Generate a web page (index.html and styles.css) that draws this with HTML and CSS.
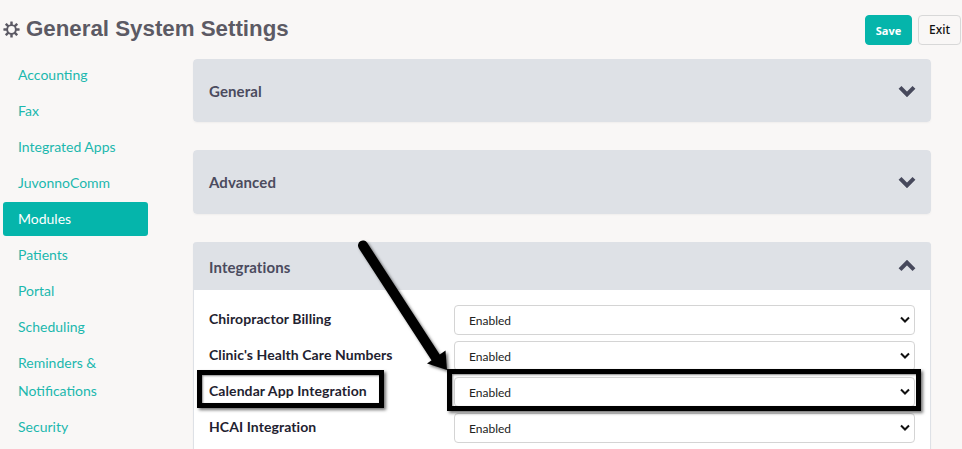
FILE: index.html
```html
<!DOCTYPE html>
<html lang="en">
<head>
<meta charset="utf-8">
<title>General System Settings</title>
<link rel="stylesheet" href="styles.css">
</head>
<body>
<div class="page">
  <header class="topbar">
    <h1 class="title">
      <svg class="gear" viewBox="0 0 18 18" aria-hidden="true">
        <g fill="#5c5a64">
          <rect x="7.7" y="0.4" width="2.6" height="17.2" rx="0.5"/>
          <rect x="7.7" y="0.4" width="2.6" height="17.2" rx="0.5" transform="rotate(45 9 9)"/>
          <rect x="7.7" y="0.4" width="2.6" height="17.2" rx="0.5" transform="rotate(90 9 9)"/>
          <rect x="7.7" y="0.4" width="2.6" height="17.2" rx="0.5" transform="rotate(135 9 9)"/>
        </g>
        <circle cx="9" cy="9" r="5.6" fill="#5c5a64"/>
        <circle cx="9" cy="9" r="3.6" fill="#f9f7f6"/>
      </svg>
      <span>General System Settings</span>
    </h1>
    <div class="actions">
      <button class="btn btn-save" type="button">Save</button>
      <button class="btn btn-exit" type="button">Exit</button>
    </div>
  </header>
  <div class="content">
    <nav class="sidenav">
      <a class="navitem" href="#">Accounting</a>
      <a class="navitem" href="#">Fax</a>
      <a class="navitem" href="#">Integrated Apps</a>
      <a class="navitem" href="#">JuvonnoComm</a>
      <a class="navitem active" href="#">Modules</a>
      <a class="navitem" href="#">Patients</a>
      <a class="navitem" href="#">Portal</a>
      <a class="navitem" href="#">Scheduling</a>
      <a class="navitem" href="#">Reminders &amp; Notifications</a>
      <a class="navitem" href="#">Security</a>
    </nav>
    <main class="panels">
      <section class="panel">
        <div class="panel-head tall"><h2>General</h2>
          <svg class="chev" viewBox="0 0 16 10" aria-hidden="true"><path d="M1.8 1.8L8 8l6.200-6.200" /></svg>
        </div>
      </section>
      <section class="panel">
        <div class="panel-head tall"><h2>Advanced</h2>
          <svg class="chev" viewBox="0 0 16 10" aria-hidden="true"><path d="M1.8 1.8L8 8l6.200-6.200" /></svg>
        </div>
      </section>
      <section class="panel open">
        <div class="panel-head"><h2>Integrations</h2>
          <svg class="chev" viewBox="0 0 16 10" aria-hidden="true"><path d="M1.8 8.200L8 2l6.200 6.200" /></svg>
        </div>
        <div class="panel-body">
          <div class="row"><label class="row-label">Chiropractor Billing</label>
            <div class="field"><select class="select"><option>Enabled</option><option>Disabled</option></select>
            <svg class="sel-arrow" viewBox="0 0 10 7" aria-hidden="true"><path d="M1 1.5l4 4 4-4"/></svg></div></div>
          <div class="row"><label class="row-label">Clinic's Health Care Numbers</label>
            <div class="field"><select class="select"><option>Enabled</option><option>Disabled</option></select>
            <svg class="sel-arrow" viewBox="0 0 10 7" aria-hidden="true"><path d="M1 1.5l4 4 4-4"/></svg></div></div>
          <div class="row"><label class="row-label">Calendar App Integration</label>
            <div class="field"><select class="select"><option>Enabled</option><option>Disabled</option></select>
            <svg class="sel-arrow" viewBox="0 0 10 7" aria-hidden="true"><path d="M1 1.5l4 4 4-4"/></svg></div></div>
          <div class="row"><label class="row-label">HCAI Integration</label>
            <div class="field"><select class="select"><option>Enabled</option><option>Disabled</option></select>
            <svg class="sel-arrow" viewBox="0 0 10 7" aria-hidden="true"><path d="M1 1.5l4 4 4-4"/></svg></div></div>
        </div>
      </section>
    </main>
  </div>
  <div class="callout callout-label"></div>
  <div class="callout callout-field"></div>
  <svg class="arrow" viewBox="0 0 962 449" aria-hidden="true">
    <defs>
      <filter id="soft" x="-20%" y="-20%" width="140%" height="140%">
        <feDropShadow dx="2" dy="2" stdDeviation="1.5" flood-color="#000" flood-opacity="0.55"/>
      </filter>
    </defs>
    <g filter="url(#soft)">
      <path d="M363 245.500L436 358" stroke="#000" stroke-width="10" stroke-linecap="round" fill="none"/>
      <path d="M447 370L427 363.500L445.500 350.500Z" fill="#000"/>
    </g>
  </svg>
</div>
</body>
</html>
```
FILE: styles.css
```css
* { box-sizing: border-box; }
html, body { margin: 0; padding: 0; }
body {
  width: 962px;
  height: 449px;
  overflow: hidden;
  background: #f9f7f6;
  font-family: Lato, "Liberation Sans", sans-serif;
  color: #4b4b5e;
}
.page { position: relative; width: 962px; height: 449px; overflow: hidden; }

.topbar {
  display: flex;
  justify-content: space-between;
  align-items: center;
  height: 58px;
  padding: 0 0 0 3px;
}
.title {
  display: flex;
  align-items: center;
  gap: 6px;
  margin: 0;
  font: bold 22.3px "Liberation Sans", Arial, sans-serif;
  color: #5c5a64;
}
.gear { width: 17px; height: 17px; flex: none; }
.actions { display: flex; gap: 6px; margin-top: 2px; }
.btn {
  height: 30px;
  padding: 0;
  border-radius: 4px;
  font: 13px/1 "Noto Sans", sans-serif;
}
.btn-save { width: 47px; background: #05b5ab; border: 1px solid #05b5ab; color: #fff; font-weight: 700; font-size: 11px; }
.btn-exit { width: 43px; margin-right: 1px; background: #f9f7f6; border: 1px solid #d8d8d8; color: #111; font-size: 12px; font-weight: 500; }

.content { display: flex; align-items: flex-start; padding-left: 3px; }
.sidenav { width: 145px; flex: none; display: flex; flex-direction: column; }
.navitem {
  display: block;
  padding: 3px 15px;
  margin-bottom: 2px;
  border-radius: 3px;
  font-size: 14px;
  line-height: 28px;
  color: #1cb8ae;
  text-decoration: none;
}
.navitem.active { background: #05b5ab; color: #fff; }

.panels { width: 738px; margin-left: 45px; padding-top: 1px; display: flex; flex-direction: column; gap: 28px; }
.panel { border-radius: 4px; overflow: hidden; box-shadow: 0 1px 2px rgba(0,0,0,.04); }
.panel.open { background: #fff; border: 1px solid #dee1e6; border-top: 0; border-bottom: 0; overflow: visible; }
.panel-head {
  display: flex;
  justify-content: space-between;
  align-items: center;
  height: 48px;
  padding: 0 15px 0 16px;
  background: #dee1e6;
  border-radius: 4px 4px 0 0;
}
.panel.open .panel-head { margin: 0 -1px; }
.panel.open .panel-head h2 { margin-top: 2px; }
.panel-head.tall { height: 63.4px; border-radius: 4px; }
.panel-head h2 { margin: 0; font-size: 15px; font-weight: 700; color: #4b4b5e; letter-spacing: .1px; }
.chev { width: 18px; height: 12px; flex: none; }
.chev path { fill: none; stroke: #47495c; stroke-width: 3.6; }

.panel-body { padding: 15px 15px 20px; display: flex; flex-direction: column; gap: 6px; }
.row { display: flex; align-items: flex-start; height: 30px; }
.row-label { width: 245px; flex: none; font-size: 14px; font-weight: 700; line-height: 28px; color: #1f2230; letter-spacing: .08px; }
.field { position: relative; width: 461px; flex: none; }
.select {
  display: block;
  width: 100%;
  height: 30px;
  padding: 2px 14px 0;
  appearance: none;
  -webkit-appearance: none;
  background: #fff;
  border: 1px solid #d4d4d4;
  border-radius: 4px;
  font: 12px Lato, sans-serif;
  color: #222;
}
.sel-arrow { position: absolute; top: 11px; right: 5px; width: 10px; height: 7px; pointer-events: none; }
.sel-arrow path { fill: none; stroke: #111; stroke-width: 2; }

.callout {
  position: absolute;
  border: 5px solid #000;
  box-shadow: 2px 2px 3px rgba(0,0,0,.55), inset 1px 1px 2px rgba(0,0,0,.45);
}
.callout-label { left: 197px; top: 370px; width: 187px; height: 38px; }
.callout-field { left: 447px; top: 369px; width: 474px; height: 42px; }
.arrow { position: absolute; left: 0; top: 0; width: 962px; height: 449px; pointer-events: none; }
```
